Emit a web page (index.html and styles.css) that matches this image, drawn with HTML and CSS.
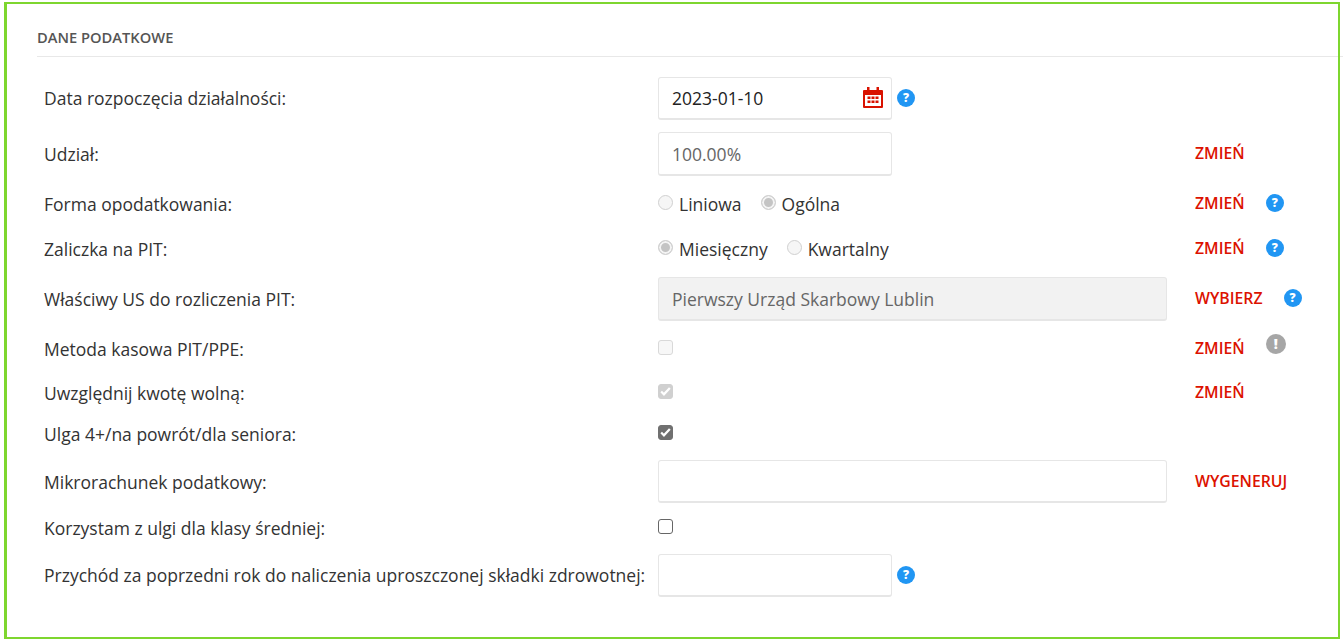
FILE: index.html
```html
<!DOCTYPE html>
<html lang="pl">
<head>
  <meta charset="UTF-8">
  <title>Dane podatkowe</title>
  <link rel="stylesheet" href="styles.css">
</head>
<body>
  <div class="frame">
    <h2 class="section-title">DANE PODATKOWE</h2>

    <div class="form">
      <div class="row">
        <label class="label">Data rozpoczęcia działalności:</label>
        <div class="field">
          <div class="input input-small input-date">
            <span class="value">2023-01-10</span>
            <svg class="calendar" width="20" height="21" viewBox="0 0 20 21">
              <path fill="#d91200" d="M4 0h2.5v3H13.500V0H16v3h3a1 1 0 0 1 1 1v16a1 1 0 0 1-1 1H1a1 1 0 0 1-1-1V4a1 1 0 0 1 1-1h3zM2 8v11h16V8z"/>
              <path fill="#d91200" d="M4.500 9.500h3v2.500h-3zM8.500 9.500h3v2.500h-3zM12.500 9.500h3v2.500h-3zM4.500 13.500h3v2.500h-3zM8.500 13.500h3v2.500h-3zM12.500 13.500h3v2.500h-3z"/>
            </svg>
          </div>
          <span class="help">?</span>
        </div>
        <div class="actions"></div>
      </div>

      <div class="row">
        <label class="label">Udział:</label>
        <div class="field">
          <div class="input input-small input-tall"><span class="value muted">100.00%</span></div>
        </div>
        <div class="actions"><a class="action">ZMIEŃ</a></div>
      </div>

      <div class="row">
        <label class="label">Forma opodatkowania:</label>
        <div class="field radios">
          <label class="radio"><input type="radio" name="forma" disabled>Liniowa</label>
          <label class="radio"><input type="radio" name="forma" checked disabled>Ogólna</label>
        </div>
        <div class="actions"><a class="action">ZMIEŃ</a><span class="help">?</span></div>
      </div>

      <div class="row">
        <label class="label">Zaliczka na PIT:</label>
        <div class="field radios">
          <label class="radio"><input type="radio" name="zaliczka" checked disabled>Miesięczny</label>
          <label class="radio"><input type="radio" name="zaliczka" disabled>Kwartalny</label>
        </div>
        <div class="actions"><a class="action">ZMIEŃ</a><span class="help">?</span></div>
      </div>

      <div class="row">
        <label class="label">Właściwy US do rozliczenia PIT:</label>
        <div class="field">
          <div class="input input-wide input-tall input-disabled"><span class="value muted">Pierwszy Urząd Skarbowy Lublin</span></div>
        </div>
        <div class="actions"><a class="action">WYBIERZ</a><span class="help">?</span></div>
      </div>

      <div class="row">
        <label class="label">Metoda kasowa PIT/PPE:</label>
        <div class="field"><input class="check" type="checkbox" disabled></div>
        <div class="actions"><a class="action">ZMIEŃ</a><span class="help help-grey">!</span></div>
      </div>

      <div class="row">
        <label class="label">Uwzględnij kwotę wolną:</label>
        <div class="field"><input class="check" type="checkbox" checked disabled></div>
        <div class="actions"><a class="action">ZMIEŃ</a></div>
      </div>

      <div class="row">
        <label class="label">Ulga 4+/na powrót/dla seniora:</label>
        <div class="field"><input class="check" type="checkbox" checked></div>
        <div class="actions"></div>
      </div>

      <div class="row">
        <label class="label">Mikrorachunek podatkowy:</label>
        <div class="field"><div class="input input-wide"></div></div>
        <div class="actions"><a class="action">WYGENERUJ</a></div>
      </div>

      <div class="row">
        <label class="label">Korzystam z ulgi dla klasy średniej:</label>
        <div class="field"><input class="check" type="checkbox"></div>
        <div class="actions"></div>
      </div>

      <div class="row row-last">
        <label class="label">Przychód za poprzedni rok do naliczenia uproszczonej składki zdrowotnej:</label>
        <div class="field">
          <div class="input input-small"></div>
          <span class="help">?</span>
        </div>
        <div class="actions"></div>
      </div>
    </div>
  </div>
</body>
</html>
```

FILE: styles.css
```css
html, body {
  margin: 0;
  padding: 0;
}

body {
  font-family: "Open Sans", sans-serif;
  font-size: 17.5px;
  color: #333;
  padding: 2px 3px 3px 4px;
  overflow: hidden;
}

.frame {
  box-sizing: border-box;
  height: 637px;
  border: 2px solid #7ed62f;
  border-left-width: 3px;
  padding: 0 13px 0 30px;
}

/* line runs on under the green border, to the edge of the window */
.section-title {
  position: relative;
  z-index: -1;
  margin: 0 -18px 0 0;
  height: 53px;
  line-height: 66px;
  box-sizing: border-box;
  border-bottom: 1px solid #e8e8e8;
  font-size: 14.7px;
  font-weight: 600;
  color: #555;
}

.form {
  display: grid;
  grid-template-rows: 52px 60px 40px 50px 50px 50px 38px 44px 51px 42px 53px;
  margin-top: 15px;
}

.row {
  display: grid;
  grid-template-columns: 614px 537px 1fr;
  align-items: center;
  padding-left: 7px;
}

.label {
  color: #333;
  white-space: nowrap;
}

.field {
  display: flex;
  align-items: center;
  gap: 5px;
}

.input {
  box-sizing: border-box;
  height: 43px;
  display: flex;
  align-items: center;
  justify-content: space-between;
  padding: 0 8px 0 13px;
  background: #fff;
  border: 1px solid #e6e6e6;
  border-bottom-width: 2px;
  border-radius: 3px;
}

.input-small {
  width: 234px;
}

.input-wide {
  width: 509px;
}

.input-tall {
  height: 44px;
}

.input-disabled {
  background: #f2f2f2;
}

.value {
  color: #222;
}

.muted {
  color: #666;
}

.calendar {
  flex: none;
}

.radios {
  gap: 19px;
}

.radio {
  display: flex;
  align-items: center;
  gap: 6px;
}

.radio input {
  appearance: none;
  box-sizing: border-box;
  width: 15px;
  height: 15px;
  margin: -3px 0 0 0;
  border: 1px solid #d0d0d0;
  border-radius: 50%;
  background: #f6f6f6;
}

.radio input:checked {
  background: #c4c4c4;
  box-shadow: inset 0 0 0 2px #f4f4f4;
}

.check {
  appearance: none;
  box-sizing: border-box;
  width: 15px;
  height: 15px;
  margin: -4px 0 0 0;
  border: 1px solid #666;
  border-radius: 3px;
  background: #fff;
}

.check:disabled {
  border-color: #d9d9d9;
  background: #f7f7f7;
}

.check:checked {
  border-color: #707070;
  background: #707070 url("data:image/svg+xml,%3Csvg xmlns='http://www.w3.org/2000/svg' viewBox='0 0 15 15'%3E%3Cpath d='M2.500 7.500l3.200 3.200 6.800-7.200' fill='none' stroke='%23fff' stroke-width='2.600'/%3E%3C/svg%3E") center no-repeat;
}

.check:checked:disabled {
  border-color: #d0d0d0;
  background-color: #d0d0d0;
}

.actions {
  display: flex;
  align-items: center;
  gap: 21px;
  margin-top: -2px;
}

.action {
  font-size: 15.8px;
  font-weight: 600;
  color: #dc1200;
}

.help {
  flex: none;
  width: 18px;
  height: 18px;
  border-radius: 50%;
  background: #2196f3;
  color: #fff;
  font-size: 12px;
  font-weight: 800;
  line-height: 18px;
  text-align: center;
}

.help-grey {
  width: 20px;
  height: 20px;
  line-height: 20px;
  margin-top: -8px;
  background: #a6a6a6;
  font-size: 14px;
}

.row-last .label {
  margin-top: -2px;
}

.row-last .help {
  margin-top: -2px;
}
```
